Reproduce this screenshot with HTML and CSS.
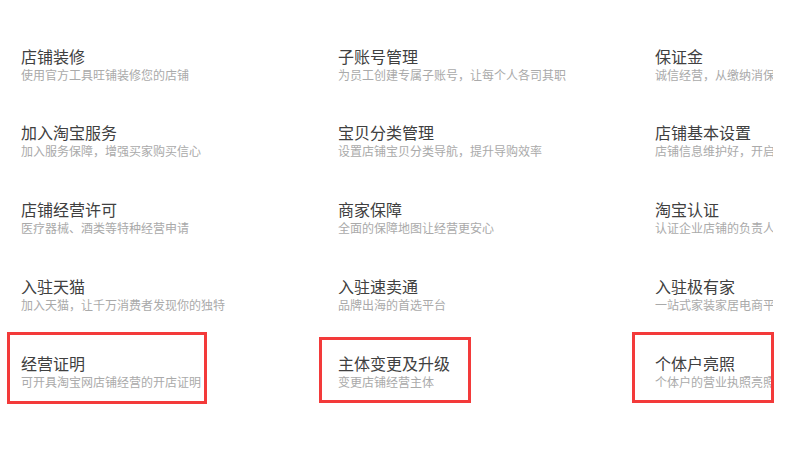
FILE: index.html
```html
<!DOCTYPE html>
<html lang="zh-CN">
<head>
    <meta charset="UTF-8">
    <meta name="viewport" content="width=device-width, initial-scale=1.0">
    <title>店铺服务</title>
    <link rel="stylesheet" href="styles.css">
</head>
<body>
    <div class="page">
        <div class="viewport">
            <ul class="service-grid">
                <li class="service">
                    <h3>店铺装修</h3>
                    <p>使用官方工具旺铺装修您的店铺</p>
                </li>
                <li class="service">
                    <h3>子账号管理</h3>
                    <p>为员工创建专属子账号，让每个人各司其职</p>
                </li>
                <li class="service">
                    <h3>保证金</h3>
                    <p>诚信经营，从缴纳消保金开始</p>
                </li>
                <li class="service">
                    <h3>加入淘宝服务</h3>
                    <p>加入服务保障，增强买家购买信心</p>
                </li>
                <li class="service">
                    <h3>宝贝分类管理</h3>
                    <p>设置店铺宝贝分类导航，提升导购效率</p>
                </li>
                <li class="service">
                    <h3>店铺基本设置</h3>
                    <p>店铺信息维护好，开启经营之路</p>
                </li>
                <li class="service">
                    <h3>店铺经营许可</h3>
                    <p>医疗器械、酒类等特种经营申请</p>
                </li>
                <li class="service">
                    <h3>商家保障</h3>
                    <p>全面的保障地图让经营更安心</p>
                </li>
                <li class="service">
                    <h3>淘宝认证</h3>
                    <p>认证企业店铺的负责人信息</p>
                </li>
                <li class="service">
                    <h3>入驻天猫</h3>
                    <p>加入天猫，让千万消费者发现你的独特</p>
                </li>
                <li class="service">
                    <h3>入驻速卖通</h3>
                    <p>品牌出海的首选平台</p>
                </li>
                <li class="service">
                    <h3>入驻极有家</h3>
                    <p>一站式家装家居电商平台</p>
                </li>
                <li class="service">
                    <h3>经营证明</h3>
                    <p>可开具淘宝网店铺经营的开店证明</p>
                </li>
                <li class="service">
                    <h3>主体变更及升级</h3>
                    <p>变更店铺经营主体</p>
                </li>
                <li class="service">
                    <h3>个体户亮照</h3>
                    <p>个体户的营业执照亮照公示</p>
                </li>
            </ul>
        </div>

        <!-- annotation boxes -->
        <div class="mark mark-1"></div>
        <div class="mark mark-2"></div>
        <div class="mark mark-3"></div>
    </div>
</body>
</html>
```

FILE: styles.css
```css
body {
    margin: 0;
    background-color: #fff;
    font-family: "Noto Sans CJK SC", "Noto Sans", sans-serif;
    overflow: hidden;
}

.page {
    position: relative;
    width: 803px;
    height: 461px;
}

.viewport {
    width: 773px;
    height: 461px;
    overflow: hidden;
}

.service-grid {
    list-style: none;
    margin: 0;
    padding: 45.5px 0 0 21px;
    display: grid;
    grid-template-columns: repeat(3, 317px);
    grid-auto-rows: 76.75px;
}

.service {
    white-space: nowrap;
}

.service h3 {
    margin: 0;
    font-size: 16px;
    font-weight: normal;
    line-height: 20px;
    color: #404040;
}

.service p {
    margin: 0;
    font-size: 12px;
    line-height: 18px;
    color: #aaa;
}

.mark {
    position: absolute;
    border: 3px solid #f33a3a;
    box-sizing: border-box;
}

.mark-1 {
    left: 7px;
    top: 332px;
    width: 200px;
    height: 72px;
}

.mark-2 {
    left: 319px;
    top: 337px;
    width: 152px;
    height: 66px;
}

.mark-3 {
    left: 632px;
    top: 332px;
    width: 142px;
    height: 71px;
}
```
